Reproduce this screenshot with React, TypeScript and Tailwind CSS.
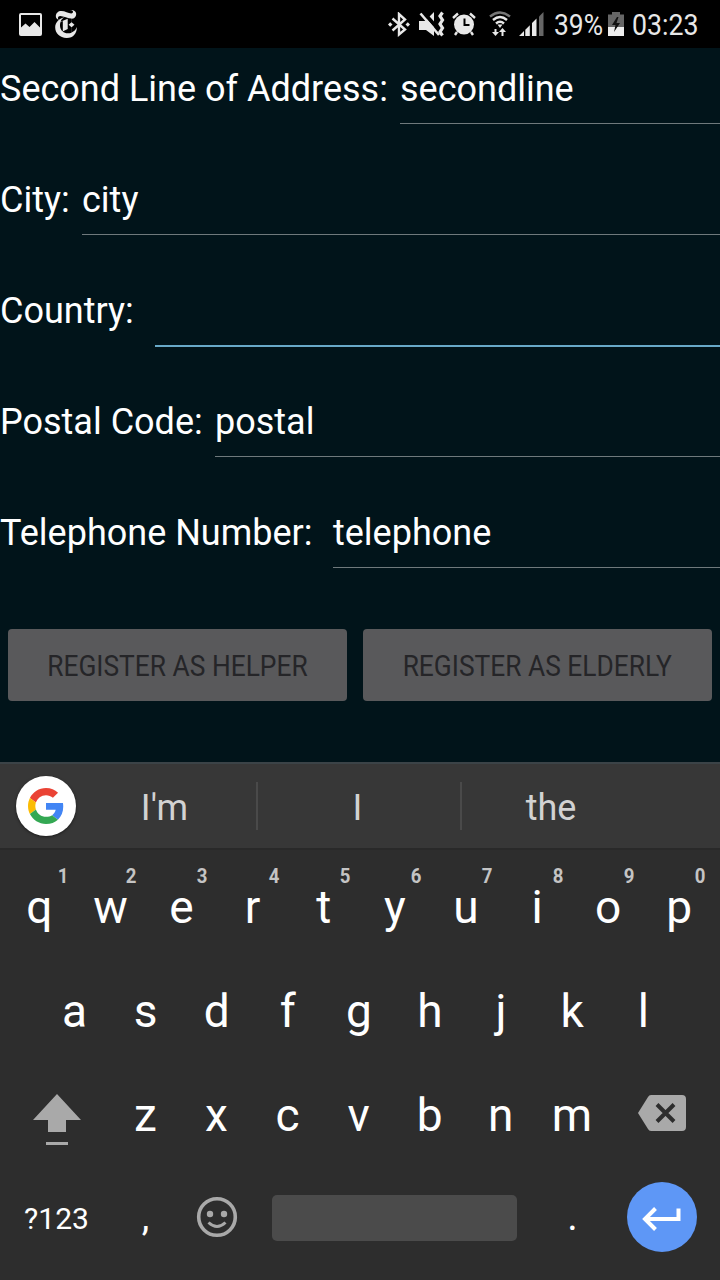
import React from "react";
import { SiNewyorktimes } from "react-icons/si";

function StatusBar() {
  return (
    <header className="flex h-12 shrink-0 items-center bg-black text-[#e8e8e8]">
      <svg className="ml-[19px] h-[23px] w-[23px]" viewBox="0 0 23 23" fill="currentColor">
        <path
          fillRule="evenodd"
          d="M2 0h19a2 2 0 0 1 2 2v19a2 2 0 0 1-2 2H2a2 2 0 0 1-2-2V2a2 2 0 0 1 2-2zM2 2v12.500l4.500-4 4 3.500 5-5 5.500 5.500V2z"
        />
      </svg>
      <SiNewyorktimes className="ml-[10px] h-7 w-7" />
      <svg className="ml-[308px] h-[25px] w-[22px]" viewBox="0 0 22 25" fill="currentColor">
        <path d="M4.500 6.500l12.500 11-6 5V2l6 5.500L4.500 18.500" fill="none" stroke="currentColor" strokeWidth="2.400" />
        <path d="M2.200 10.200l2.300 2.300-2.300 2.300L0 12.500zM19.800 10.200l2.200 2.300-2.200 2.300-2.300-2.300z" />
      </svg>
      <svg className="ml-[9px] h-[26px] w-[26px]" viewBox="0 0 26 26" fill="currentColor">
        <path d="M0 10h6l9-9v24l-8-6H0z" />
        <path d="M3 0l18 20" stroke="#000" strokeWidth="4" />
        <path d="M1.500 2.500L20 24" stroke="currentColor" strokeWidth="2.600" />
        <path d="M23.500 1.500l-2.500 3.500 2.500 4-2.500 4 2.500 4-2.500 4 2.500 3.500" fill="none" stroke="currentColor" strokeWidth="3.200" />
      </svg>
      <svg className="ml-[7px] h-6 w-6" viewBox="0 0 24 24" fill="currentColor">
        <circle cx="12" cy="12.500" r="10" />
        <path d="M1 6l5-4.500M23 6l-5-4.500M5 20l-2 3M19 20l2 3" stroke="currentColor" strokeWidth="2.400" />
        <path d="M12.500 6.500V13h5" fill="none" stroke="#000" strokeWidth="2" />
      </svg>
      <svg className="ml-[13px] h-[26px] w-[22px]" viewBox="0 0 22 26" fill="none">
        <path d="M1 5.500Q11-2.500 21 5.500" stroke="#777" strokeWidth="2.400" />
        <path d="M4 9Q11 3 18 9M7 12.500Q11 9 15 12.500" stroke="currentColor" strokeWidth="2.400" />
        <path d="M8.500 13.500h5L11 17z" fill="currentColor" />
        <path d="M7.500 18v3h2.500l-3.500 4-3.500-4h2.500v-3zM12.500 25v-4H10l3.500-4 3.500 4h-2.500v4z" fill="currentColor" />
      </svg>
      <svg className="ml-[8px] h-6 w-[25px]" viewBox="0 0 25 24" fill="currentColor">
        <path d="M0 24l5-5v5zM6.300 24v-6.300l4.500-4.500V24zM13 24V11l4.500-4.500V24z" />
        <path d="M20 24V4.500L24.500 0v24z" fill="#666" />
      </svg>
      <span className="ml-[10px] w-[54px] origin-left scale-x-[0.88] pt-px text-[30px] leading-[49px] whitespace-nowrap">39%</span>
      <svg className="h-6 w-4" viewBox="0 0 16 24">
        <path d="M0 2.500h4V0h8v2.500h4V24H0z" fill="#666" />
        <path d="M0 15h16v9H0z" fill="#eee" />
        <path d="M9 5L4 13h3.500L6 20l6-9H8.500L10.500 5z" fill="#111" />
      </svg>
      <span className="ml-[8px] w-[80px] origin-left scale-x-[0.89] pt-px text-[30px] leading-[49px] whitespace-nowrap">03:23</span>
    </header>
  );
}

type FieldProps = { label: string; value: string; labelClass: string; focused?: boolean };

function Field({ label, value, labelClass, focused }: FieldProps) {
  return (
    <div className="flex h-[111px] items-start text-[36px] leading-[82px] whitespace-nowrap text-white">
      <label className={labelClass}>{label}</label>
      <div className={focused ? "h-[77px] flex-1 border-b-2 border-[#68a9c8]" : "h-[76px] flex-1 border-b border-[#6f797c]"}>
        {value}
      </div>
    </div>
  );
}

function RegisterButton({ children, size }: { children: string; size: string }) {
  return (
    <button className={`${size} flex h-[72px] items-center justify-center rounded-[4px] bg-[#59595b] text-[29px] text-[#252528]`}>
      <span className="scale-x-[0.908] pt-[4px] whitespace-nowrap">{children}</span>
    </button>
  );
}

function Suggestions() {
  return (
    <div className="flex h-[88px] items-center border-t-2 border-b-2 border-t-[#3b4347] border-b-[#292929] bg-[#373737] text-[36px] text-[#d2d2d2]">
      <div className="ml-4 flex h-[60px] w-[60px] items-center justify-center rounded-full bg-white shadow-[0_1px_3px_rgba(0,0,0,0.5)]">
        <svg className="h-9 w-9" viewBox="0 0 48 48">
          <path fill="#EA4335" d="M24 9.500c3.540 0 6.710 1.220 9.210 3.600l6.850-6.850C35.900 2.380 30.470 0 24 0 14.620 0 6.510 5.380 2.560 13.220l7.980 6.190C12.430 13.720 17.740 9.500 24 9.500z" />
          <path fill="#4285F4" d="M46.980 24.550c0-1.570-.15-3.090-.38-4.550H24v9.020h12.940c-.58 2.960-2.260 5.480-4.780 7.180l7.730 6c4.510-4.180 7.090-10.360 7.090-17.650z" />
          <path fill="#FBBC05" d="M10.530 28.590c-.48-1.450-.76-2.990-.76-4.590s.27-3.140.76-4.590l-7.980-6.190C.92 16.460 0 20.120 0 24c0 3.880.92 7.540 2.560 10.780l7.970-6.190z" />
          <path fill="#34A853" d="M24 48c6.480 0 11.930-2.130 15.890-5.810l-7.730-6c-2.150 1.450-4.920 2.300-8.160 2.300-6.260 0-11.570-4.220-13.470-9.910l-7.980 6.190C6.510 42.620 14.620 48 24 48z" />
        </svg>
      </div>
      <div className="w-[180px] pt-[3px] pr-[3px] text-center">I'm</div>
      <div className="h-12 w-[2px] bg-[#4a4a4a]" />
      <div className="w-[202px] pt-[3px] pr-[3px] text-center">I</div>
      <div className="h-12 w-[2px] bg-[#4a4a4a]" />
      <div className="w-[178px] pt-[3px] text-center">the</div>
    </div>
  );
}

function Key({ letter, hint }: { letter: string; hint?: string }) {
  return (
    <div className="relative w-[71.1px] text-center">
      {letter}
      {hint && (
        <span
          className={`absolute top-[9px] w-5 scale-x-[0.93] text-center text-[20px] leading-6 font-bold text-[#c4c4c4] ${
            hint === "1" ? "left-[49.5px]" : "left-[46.500px]"
          }`}
        >
          {hint}
        </span>
      )}
    </div>
  );
}

const topRow = ["q", "w", "e", "r", "t", "y", "u", "i", "o", "p"];
const homeRow = ["a", "s", "d", "f", "g", "h", "j", "k", "l"];
const bottomRow = ["z", "x", "c", "v", "b", "n", "m"];

function Keyboard() {
  return (
    <section className="flex h-[518px] flex-col bg-[#2d2d2d] text-[46px] text-white">
      <Suggestions />
      <div className="flex h-[109px] pt-[5px] pl-[3.8px] leading-[104px]">
        {topRow.map((k, i) => (
          <Key key={k} letter={k} hint={String((i + 1) % 10)} />
        ))}
      </div>
      <div className="flex h-[104px] pl-[39px] leading-[104px]">
        {homeRow.map((k) => (
          <Key key={k} letter={k} />
        ))}
      </div>
      <div className="flex h-[105px] items-center leading-[105px]">
        <div className="flex w-[109.8px] justify-center pt-2 pl-1">
          <svg className="h-[52px] w-12" viewBox="0 0 48 52" fill="#a9a9a9">
            <path d="M24 0l24 26H33v12H15V26H0zM13 48h22v3H13z" />
          </svg>
        </div>
        {bottomRow.map((k) => (
          <Key key={k} letter={k} />
        ))}
        <svg className="mb-[5px] ml-[30.5px] h-9 w-12" viewBox="0 0 48 36">
          <path d="M13 0h31a4 4 0 0 1 4 4v28a4 4 0 0 1-4 4H13q-2 0-3-2L0 18 10 2q1-2 3-2z" fill="#a9a9a9" />
          <path d="M19 9.500l17 17M36 9.500l-17 17" stroke="#2d2d2d" strokeWidth="4" />
        </svg>
      </div>
      <div className="flex h-[98px] items-center">
        <div className="w-[110px] pt-[2px] pl-[3px] text-center text-[30px]">?123</div>
        <div className="w-[71px] text-center text-[38px] leading-[102px]">,</div>
        <svg className="ml-[15px] h-[42px] w-[42px]" viewBox="0 0 42 42" fill="none" stroke="#a9a9a9">
          <circle cx="21" cy="21" r="18.300" strokeWidth="3.600" />
          <circle cx="14" cy="18" r="3.200" fill="#a9a9a9" stroke="none" />
          <circle cx="28" cy="18" r="3.200" fill="#a9a9a9" stroke="none" />
          <path d="M12.500 26.500q8.500 8 17 0" strokeWidth="3" />
        </svg>
        <div className="mt-[2px] ml-[34px] h-[46px] w-[245px] rounded-[5px] bg-[#4b4b4b]" />
        <div className="ml-5 w-[71px] text-center text-[40px] leading-[104px]">.</div>
        <button className="ml-[19px] flex h-[70px] w-[70px] items-center justify-center rounded-full bg-[#5e97f6]">
          <svg className="mt-[4px] mr-[3px] h-6 w-10" viewBox="0 0 40 24" fill="none" stroke="#fff" strokeWidth="4">
            <path d="M37.500 1.500V12H4M14.500 1.500L4 12l10.500 10.500" />
          </svg>
        </button>
      </div>
    </section>
  );
}

export default function App() {
  return (
    <main className="flex h-[1280px] w-[720px] flex-col overflow-hidden bg-[#01141a] font-[Roboto,sans-serif]">
      <StatusBar />
      <section className="h-[714px]">
        <Field label="Second Line of Address:" value="secondline" labelClass="w-[400px]" />
        <Field label="City:" value="city" labelClass="w-[82px]" />
        <Field label="Country:" value="" labelClass="w-[155px]" focused />
        <Field label="Postal Code:" value="postal" labelClass="w-[215px]" />
        <Field label="Telephone Number:" value="telephone" labelClass="w-[333px]" />
        <div className="mt-[26px] flex gap-4 px-2">
          <RegisterButton size="w-[339px]">REGISTER AS HELPER</RegisterButton>
          <RegisterButton size="w-[349px]">REGISTER AS ELDERLY</RegisterButton>
        </div>
      </section>
      <Keyboard />
    </main>
  );
}
